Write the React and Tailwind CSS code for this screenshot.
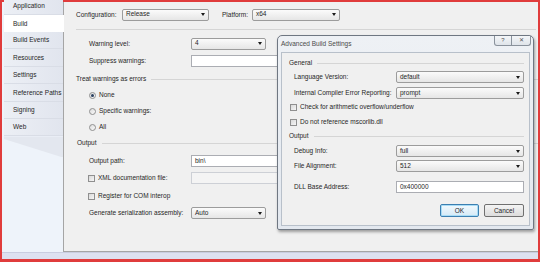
import React from "react";

const font = "font-['Liberation_Sans',Arial,sans-serif]";

const Combo = ({ value, className = "" }) => (
  <div
    className={`flex h-[12px] items-center justify-between rounded-[2px] border border-[#9c9c9c] bg-linear-to-b from-[#fbfbfb] to-[#e6e6e6] pl-[3px] pr-[3px] ${className}`}
  >
    <span className="leading-none">{value}</span>
    <span className="h-0 w-0 border-x-[2.5px] border-t-[3px] border-x-transparent border-t-[#1a1a1a]" />
  </div>
);

const TextBox = ({ value = "", disabled, className = "" }) => (
  <div
    className={`flex h-[12px] items-center border border-[#abadb3] pl-[3px] leading-none ${
      disabled ? "bg-[#f4f4f4] border-[#cdd0d6]" : "bg-white"
    } ${className}`}
  >
    {value}
  </div>
);

const Check = () => (
  <span className="h-[7px] w-[7px] border border-[#8f8f8f] bg-linear-to-br from-[#d9d9d9] to-[#f6f6f6]" />
);

const Radio = ({ on }) => (
  <span className="flex h-[7px] w-[7px] items-center justify-center rounded-full border border-[#8f8f8f] bg-linear-to-br from-[#dcdcdc] to-[#fafafa]">
    {on && <span className="h-[3px] w-[3px] rounded-full bg-[#2a3f5f]" />}
  </span>
);

const Header = ({ children, className = "" }) => (
  <div className={`flex h-[12px] items-center gap-[5px] ${className}`}>
    <span>{children}</span>
    <span className="h-px flex-1 bg-[#d5d5d5]" />
  </div>
);

const tabs = [
  "Application",
  "Build",
  "Build Events",
  "Resources",
  "Settings",
  "Reference Paths",
  "Signing",
  "Web",
];

const Sidebar = () => (
  <div className="relative z-10 flex w-[61px] shrink-0 flex-col bg-[#eef3fa]">
    <div className="-mt-[4.7px] ml-[2px] flex flex-col bg-[#e6e9f0]">
      {tabs.map((t) => (
        <div
          key={t}
          className={`flex h-[17.4px] items-center pl-[9px] ${
            t === "Build"
              ? "-mr-[1px] bg-white"
              : "border-b border-[#d9dde6] bg-linear-to-r from-[#eceff5] to-[#e1e5ee]"
          }`}
        >
          {t}
        </div>
      ))}
    </div>
    <div className="ml-[2px] h-[21px] bg-[#e3e7ef] [clip-path:polygon(0_0,100%_0,100%_100%,0_12%)]" />
  </div>
);

const Main = () => (
  <div className="flex flex-1 flex-col border-b border-l border-[#a5a5a5] bg-[#f0f0f0]">
    <div className="mt-[6px] flex h-[13px] items-center pl-[12px]">
      <span className="w-[46px]">Configuration:</span>
      <Combo value="Release" className="w-[87px]" />
      <span className="ml-[13px] w-[30px]">Platform:</span>
      <Combo value="x64" className="w-[88px]" />
    </div>
    <div className="ml-[12px] mr-[2px] mt-[8px] h-px bg-[#d5d5d5]" />
    <div className="mt-[7px] flex h-[13px] items-center pl-[25px]">
      <span className="w-[102px]">Warning level:</span>
      <Combo value="4" className="w-[75px]" />
    </div>
    <div className="mt-[5px] flex h-[12px] items-center pl-[25px]">
      <span className="w-[102px]">Suppress warnings:</span>
      <TextBox className="w-[240px]" />
    </div>
    <Header className="mt-[6px] pl-[12px]">Treat warnings as errors</Header>
    {[
      ["None", true],
      ["Specific warnings:", false],
      ["All", false],
    ].map(([l, on]) => (
      <div key={l} className="mt-[4px] flex h-[12px] items-center gap-[3px] pl-[25px]">
        <Radio on={on} />
        <span>{l}</span>
      </div>
    ))}
    <Header className="mt-[4px] pl-[13px]">Output</Header>
    <div className="mt-[6px] flex h-[12px] items-center pl-[25px]">
      <span className="w-[102px]">Output path:</span>
      <TextBox value="bin\" className="w-[240px]" />
    </div>
    <div className="mt-[5px] flex h-[12px] items-center pl-[24px]">
      <span className="flex w-[103px] items-center gap-[3px]">
        <Check />
        XML documentation file:
      </span>
      <TextBox disabled className="w-[240px]" />
    </div>
    <div className="mt-[6px] flex h-[12px] items-center gap-[3px] pl-[24px]">
      <Check />
      <span>Register for COM interop</span>
    </div>
    <div className="mt-[5px] flex h-[12px] items-center pl-[25px]">
      <span className="w-[102px]">Generate serialization assembly:</span>
      <Combo value="Auto" className="w-[75px]" />
    </div>
  </div>
);

const DlgRow = ({ label, children, className = "" }) => (
  <div className={`flex h-[12px] items-center pl-[12px] ${className}`}>
    <span className="w-[102px]">{label}</span>
    {children}
  </div>
);

const DlgCheck = ({ label, className = "" }) => (
  <div className={`flex h-[12px] items-center gap-[3px] pl-[8px] ${className}`}>
    <Check />
    <span>{label}</span>
  </div>
);

const Dialog = () => (
  <div className="absolute left-[275px] top-[33px] z-20 flex h-[195px] w-[257px] flex-col rounded-t-[5px] rounded-b-[2px] border border-[#6f7782] bg-linear-to-b from-[#eef1f5] to-[#e3e8ef] shadow-[1px_2px_3px_rgba(0,0,0,0.35)]">
    <div className="relative flex h-[16px] shrink-0 items-center pl-[3px] text-[#4a4a4a]">
      Advanced Build Settings
      <div className="absolute right-[2px] top-[0px] flex">
        <div className="flex h-[10px] w-[18px] items-center justify-center rounded-bl-[3px] border border-t-0 border-[#8a929c] bg-linear-to-b from-[#f4f6f8] to-[#dfe4ea] text-[6px] text-[#555]">
          ?
        </div>
        <div className="flex h-[10px] w-[19px] items-center justify-center rounded-br-[3px] border border-l-0 border-t-0 border-[#8a929c] bg-linear-to-b from-[#f4f6f8] to-[#dfe4ea] text-[6px] text-[#555]">
          ✕
        </div>
      </div>
    </div>
    <div className="mx-[3px] mb-[3px] flex flex-1 flex-col border border-[#b8c0ca] bg-[#f0f0f0] pr-[5px]">
      <Header className="mt-[4px] pl-[7px]">General</Header>
      <DlgRow label="Language Version:" className="mt-[2px]">
        <Combo value="default" className="flex-1" />
      </DlgRow>
      <DlgRow label="Internal Compiler Error Reporting:" className="mt-[4px]">
        <Combo value="prompt" className="flex-1" />
      </DlgRow>
      <DlgCheck label="Check for arithmetic overflow/underflow" className="mt-[2px]" />
      <DlgCheck label="Do not reference mscorlib.dll" className="mt-[3px]" />
      <Header className="mt-[2px] pl-[7px]">Output</Header>
      <DlgRow label="Debug Info:" className="mt-[3px]">
        <Combo value="full" className="flex-1" />
      </DlgRow>
      <DlgRow label="File Alignment:" className="mt-[3px]">
        <Combo value="512" className="flex-1" />
      </DlgRow>
      <DlgRow label="DLL Base Address:" className="mt-[9px]">
        <TextBox value="0x400000" className="flex-1" />
      </DlgRow>
      <div className="mt-[11px] flex justify-end gap-[5px]">
        <button className="flex h-[13px] w-[39px] items-center justify-center rounded-[2px] border border-[#3c7fb1] bg-linear-to-b from-[#f2f9fd] to-[#d5eaf7] shadow-[inset_0_0_0_1px_#a8dcf6]">
          OK
        </button>
        <button className="flex h-[13px] w-[40px] items-center justify-center rounded-[2px] border border-[#707070] bg-linear-to-b from-[#f4f4f4] to-[#dcdcdc]">
          Cancel
        </button>
      </div>
    </div>
  </div>
);

export default function App() {
  return (
    <div className={`h-[262px] w-[540px] overflow-hidden bg-white text-[6.5px] text-[#262626] ${font}`}>
      <div className="relative flex h-full flex-col border-2 border-b-[3px] border-[#e03c3c] bg-[#eef3fa]">
        <div className="flex min-h-0 flex-1">
          <Sidebar />
          <Main />
        </div>
        <div className="h-[7px] shrink-0 border-t border-[#c9cde0] bg-[#dde1f0]" />
        <Dialog />
      </div>
    </div>
  );
}
